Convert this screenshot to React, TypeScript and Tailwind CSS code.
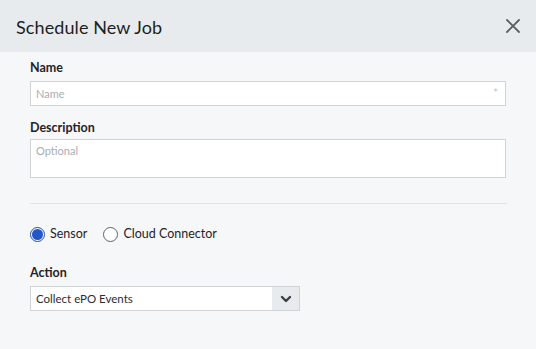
import { useState } from 'react'

export default function App() {
    const [target, setTarget] = useState<'sensor' | 'cloud'>('sensor')

    return (
        <div className="w-[536px] h-[349px] bg-[#f6f7f8] text-[#1f2328] overflow-hidden" style={{ fontFamily: 'Lato, "Open Sans", sans-serif' }}>
            <div className="h-[52px] bg-[#e8ebee] flex items-center justify-between pl-4 pr-[15px]">
                <h1 className="text-[18px] leading-none text-[#1c1f22] tracking-[0.1px] pt-[1px]">Schedule New Job</h1>
                <button className="text-[#5a5f64]">
                    <svg width="16" height="16" viewBox="0 0 16 16" fill="none" stroke="currentColor" strokeWidth="1.8" strokeLinecap="round">
                        <path d="M2 2 L14 14 M14 2 L2 14" />
                    </svg>
                </button>
            </div>

            <div className="px-[30px] pt-[8px]">
                <label className="block text-[12.5px] font-bold leading-[16px] mb-[5px]">Name</label>
                <div className="relative h-[25px] bg-white border border-[#d0d3d6] flex items-center px-[5px] text-[11px] leading-[14px]">
                    <span className="text-[#a9adb1]">Name</span>
                    <span className="absolute right-[7px] top-[4px] text-[#c2c5c8]">*</span>
                </div>

                <label className="block text-[12.5px] font-bold leading-[16px] mt-[14px] mb-[3px]">Description</label>
                <div className="h-[39px] bg-white border border-[#d0d3d6] px-[5px] pt-[4px] text-[11px] leading-[14px]">
                    <span className="text-[#a9adb1]">Optional</span>
                </div>

                <div className="h-px bg-[#e0e3e6] mt-[25px] -mr-px" />

                <div className="flex items-center gap-[16px] mt-[22px]">
                    <button className="flex items-center gap-[5px]" onClick={() => setTarget('sensor')}>
                        <Radio checked={target === 'sensor'} />
                        <span className="text-[12.5px] leading-[16px]">Sensor</span>
                    </button>
                    <button className="flex items-center gap-[5px]" onClick={() => setTarget('cloud')}>
                        <Radio checked={target === 'cloud'} />
                        <span className="text-[12.5px] leading-[16px]">Cloud Connector</span>
                    </button>
                </div>

                <label className="block text-[12.5px] font-bold leading-[16px] mt-[23px] mb-[5px]">Action</label>
                <div className="w-[270px] h-[25px] bg-white border border-[#d0d3d6] flex items-stretch">
                    <span className="flex-1 flex items-center px-[5px] text-[11.5px] text-[#2a2e33]">Collect ePO Events</span>
                    <span className="w-[27px] bg-[#e8ebee] flex items-center justify-center text-[#3a3f44]">
                        <svg width="12" height="8" viewBox="0 0 12 8" fill="none" stroke="currentColor" strokeWidth="2.4" strokeLinecap="round" strokeLinejoin="round">
                            <path d="M2 2 L6 6 L10 2" />
                        </svg>
                    </span>
                </div>
            </div>
        </div>
    )
}

function Radio({ checked }: { checked: boolean }) {
    return checked ? (
        <span className="w-[15px] h-[15px] rounded-full border border-[#1d4fb5] flex items-center justify-center">
            <span className="w-[11px] h-[11px] rounded-full bg-[#2457c5]" />
        </span>
    ) : (
        <span className="w-[15px] h-[15px] rounded-full border border-[#5e6368] bg-white" />
    )
}
